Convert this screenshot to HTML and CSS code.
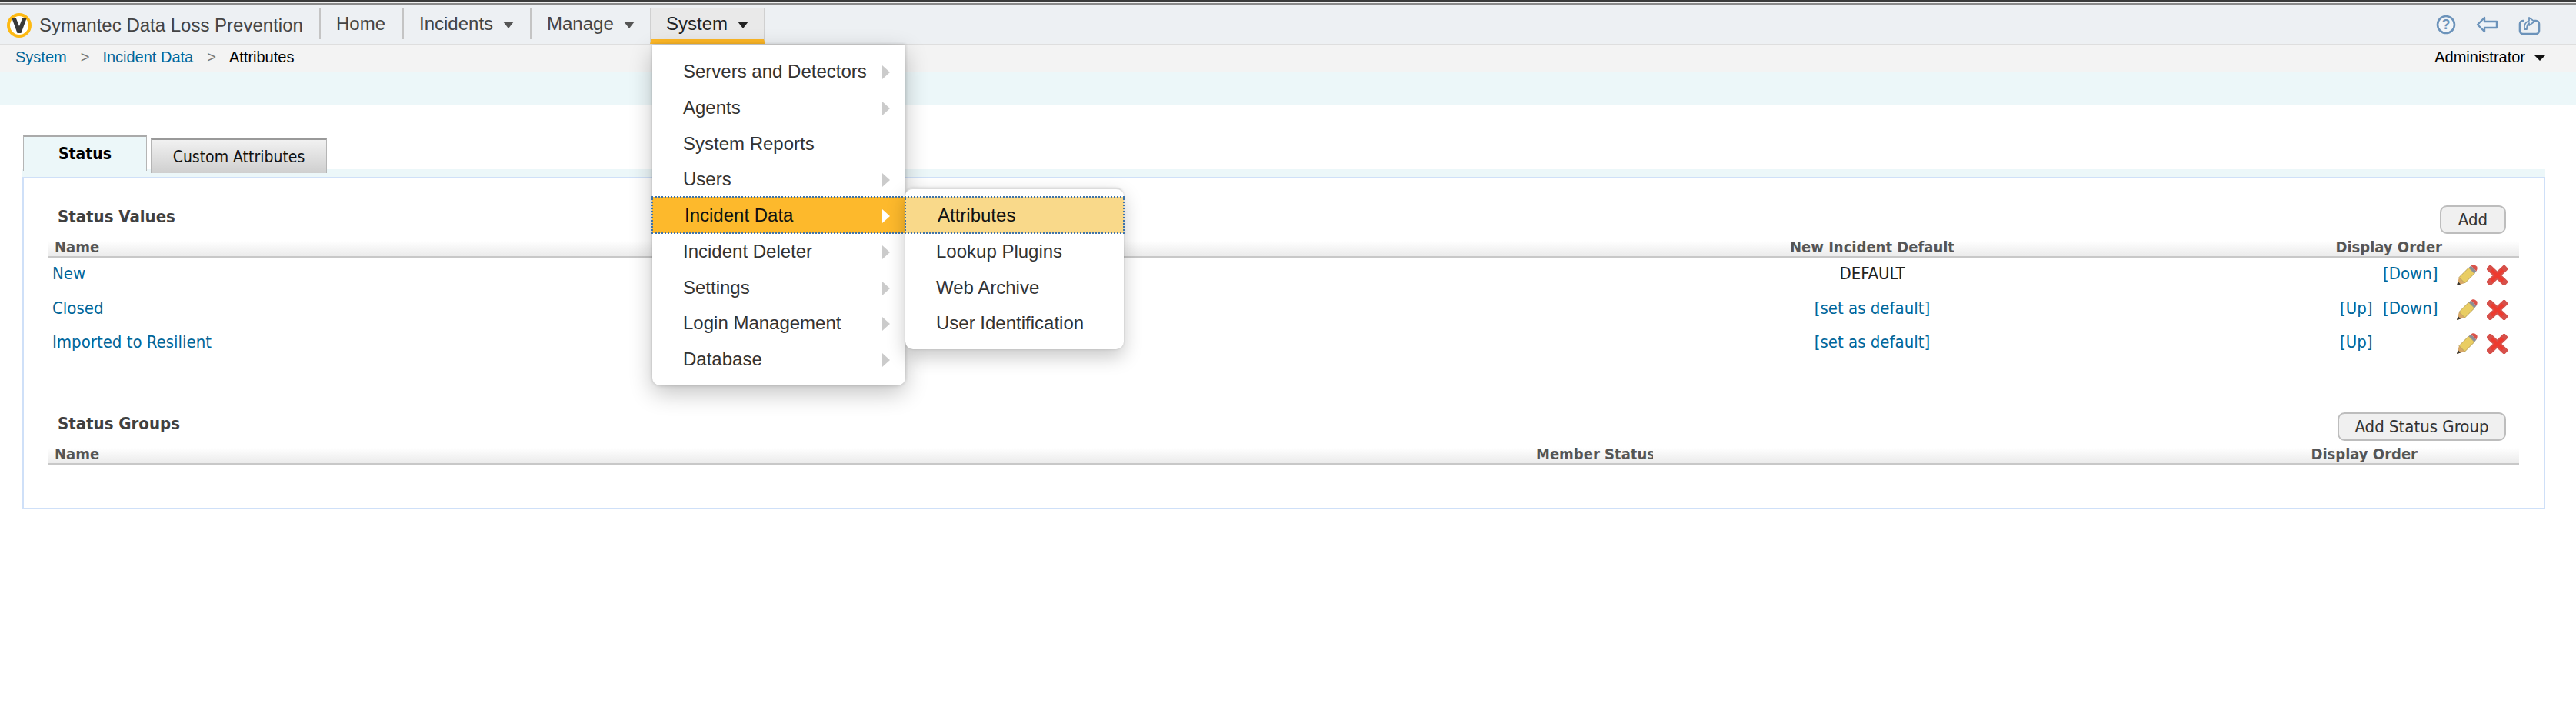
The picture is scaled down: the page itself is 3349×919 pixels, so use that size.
FILE: index.html
```html
<!DOCTYPE html>
<html lang="en">
<head>
<meta charset="utf-8">
<title>Symantec Data Loss Prevention</title>
<link rel="stylesheet" href="styles.css">
</head>
<body>
<svg class="defs" width="0" height="0" aria-hidden="true">
  <symbol id="pencil" viewBox="0 0 28 28">
    <polygon points="1,27 4,16.5 11.5,24" fill="#d8a868"/>
    <polygon points="1,27 2.6,22 6,25.4" fill="#333"/>
    <polygon points="4,16.5 16.5,4 24,11.5 11.5,24" fill="#e9cd63" stroke="#a98f45" stroke-width="0.8"/>
    <polygon points="16.5,4 19.5,1.5 26.5,8.5 24,11.5" fill="#8c8f92"/>
    <path d="M19.5 1.5 L21.5 0.3 Q24.5 -0.3 27 2.5 Q28.5 5 26.5 8.5 Z" fill="#d9534a"/>
  </symbol>
  <symbol id="cross" viewBox="0 0 27 26">
    <path d="M4.5 4.5 L22.5 21.5 M22.5 4.5 L4.5 21.5" stroke="#d6504a" stroke-width="8" stroke-linecap="square" fill="none"/>
    <path d="M6 6 L21 20 M21 6 L6 20" stroke="#ee3a2e" stroke-width="4" fill="none"/>
  </symbol>
  <symbol id="chev" viewBox="0 0 10 18"><polygon points="0,0 10,9 0,18"/></symbol>
</svg>

<div class="topline"></div>
<header class="nav">
  <div class="brand">
    <svg class="logo" viewBox="0 0 32 32">
      <circle cx="16" cy="16" r="14" fill="#fff" stroke="#fdb913" stroke-width="4"/>
      <path d="M6.5 7 H12 L16 17 L20 7 H25.5 L18.5 26 H13.5 Z" fill="#3a3a3a"/>
    </svg>
    <span>Symantec Data Loss Prevention</span>
  </div>
  <div class="nav-item home">Home</div>
  <div class="nav-item incidents">Incidents<i class="caret"></i></div>
  <div class="nav-item manage">Manage<i class="caret"></i></div>
  <div class="nav-item system">System<i class="caret dark"></i>
    <ul class="menu">
      <li>Servers and Detectors<svg class="chev"><use href="#chev"/></svg></li>
      <li>Agents<svg class="chev"><use href="#chev"/></svg></li>
      <li>System Reports</li>
      <li>Users<svg class="chev"><use href="#chev"/></svg></li>
      <li class="current">Incident Data<svg class="chev white"><use href="#chev"/></svg>
        <ul class="submenu">
          <li class="current-sub">Attributes</li>
          <li>Lookup Plugins</li>
          <li>Web Archive</li>
          <li>User Identification</li>
        </ul>
      </li>
      <li>Incident Deleter<svg class="chev"><use href="#chev"/></svg></li>
      <li>Settings<svg class="chev"><use href="#chev"/></svg></li>
      <li>Login Management<svg class="chev"><use href="#chev"/></svg></li>
      <li>Database<svg class="chev"><use href="#chev"/></svg></li>
    </ul>
  </div>
  <div class="tools">
    <svg class="tool-help" viewBox="0 0 26 26">
      <circle cx="13" cy="13" r="11" fill="#f2f5f8" stroke="#6c93ba" stroke-width="2.6"/>
      <text x="13" y="19" text-anchor="middle" class="help-q">?</text>
    </svg>
    <svg class="tool-back" viewBox="0 0 29 22">
      <polygon points="11,2 2,11 11,20 11,15 27,15 27,7 11,7" fill="#eef3f8" stroke="#6c93ba" stroke-width="2.4" stroke-linejoin="round"/>
    </svg>
    <svg class="tool-reload" viewBox="0 0 29 29">
      <path d="M8 10 H6 a4 4 0 0 0 -4 4 V23 a4 4 0 0 0 4 4 H23 a4 4 0 0 0 4 -4 V14 a4 4 0 0 0 -4 -4 H21" fill="none" stroke="#6c93ba" stroke-width="2.6"/>
      <path d="M8 21 C7 15 10 11 14 10 V6 L21 11 L14 16 V13 C12 14 11 17 11 21 Z" fill="#eef3f8" stroke="#6c93ba" stroke-width="1.8" stroke-linejoin="round"/>
    </svg>
  </div>
</header>

<div class="crumbs">
  <div class="trail">
    <a>System</a><span class="sep">&gt;</span><a>Incident Data</a><span class="sep">&gt;</span><span>Attributes</span>
  </div>
  <div class="user">Administrator<i class="caret black"></i></div>
</div>
<div class="band"></div>

<main class="main">
  <div class="tabs">
    <div class="tab active">Status</div>
    <div class="tab">Custom Attributes</div>
  </div>
  <section class="panel">
    <div class="sec-head">
      <h2>Status Values</h2>
      <button class="btn btn-add">Add</button>
    </div>
    <div class="grid values">
      <div class="th">Name</div>
      <div class="th center">New Incident Default</div>
      <div class="th right">Display Order</div>
      <div class="th"></div>

      <div class="td"><a>New</a></div>
      <div class="td center">DEFAULT</div>
      <div class="td order"><span class="up"></span><a class="down">[Down]</a></div>
      <div class="td acts"><svg class="ic-pencil"><use href="#pencil"/></svg><svg class="ic-cross"><use href="#cross"/></svg></div>

      <div class="td"><a>Closed</a></div>
      <div class="td center"><a>[set as default]</a></div>
      <div class="td order"><a class="up">[Up]</a><a class="down">[Down]</a></div>
      <div class="td acts"><svg class="ic-pencil"><use href="#pencil"/></svg><svg class="ic-cross"><use href="#cross"/></svg></div>

      <div class="td"><a>Imported to Resilient</a></div>
      <div class="td center"><a>[set as default]</a></div>
      <div class="td order"><a class="up">[Up]</a><span class="down"></span></div>
      <div class="td acts"><svg class="ic-pencil"><use href="#pencil"/></svg><svg class="ic-cross"><use href="#cross"/></svg></div>
    </div>

    <div class="sec-head second">
      <h2>Status Groups</h2>
      <button class="btn btn-group">Add Status Group</button>
    </div>
    <div class="grid groups">
      <div class="th">Name</div>
      <div class="th center">Member Status</div>
      <div class="th right">Display Order</div>
    </div>
  </section>
</main>
</body>
</html>
```

FILE: styles.css
```css
* { box-sizing: border-box; }
html, body { margin: 0; padding: 0; background: #fff; }
body { font-family: "Liberation Sans", Arial, sans-serif; color: #333; overflow: hidden; height: 919px; }
.defs { position: absolute; }
a { color: #00669a; }

.topline { height: 7px; background: linear-gradient(#3a3a3a 0 3px, #f0f0f0 3px 4px, #8a8a8a 4px 7px); }

.nav { display: flex; align-items: flex-start; height: 52px; background: #edf0f3; border-bottom: 2px solid #dedede; padding-top: 4px; font-size: 24px; color: #444; position: relative; z-index: 5; }
.brand { display: flex; align-items: center; width: 415px; height: 40px; padding-left: 9px; font-size: 24px; }
.logo { width: 32px; height: 32px; margin-right: 10px; margin-top: 4px; flex: none; }
.brand span { margin-top: 4px; }
.nav-item { height: 40px; line-height: 40px; border-left: 2px solid #c4c4c4; padding-left: 20px; flex: none; }
.home { width: 108px; }
.incidents { width: 166px; }
.manage { width: 156px; }
.system { width: 150px; height: 46px; position: relative; background: #e9e9e9; color: #222; border-left: 2px solid #d0d0d0; border-right: 2px solid #d0d0d0; border-bottom: 6px solid #fdb726; padding-left: 19px; }
.caret { display: inline-block; width: 0; height: 0; border-left: 7.5px solid transparent; border-right: 7.5px solid transparent; border-top: 9px solid #555; margin-left: 13px; vertical-align: 2px; }
.caret.dark { border-top-color: #222; }
.caret.black { border-top: 7px solid #111; margin-left: 12px; vertical-align: 2px; }

.menu, .submenu { list-style: none; margin: 0; background: #fff; font-size: 24px; color: #333; line-height: 48.75px; }
.menu { position: absolute; left: 1px; top: 47px; width: 329px; padding: 11px 0; border-radius: 0 0 10px 10px; box-shadow: 0 10px 30px rgba(0,0,0,.24), 0 0 4px rgba(0,0,0,.2); }
.menu li { height: 46.75px; padding-left: 40px; position: relative; white-space: nowrap; }
.chev { position: absolute; right: 20px; top: 16px; width: 10px; height: 18px; fill: #cbcbcb; }
.chev.white { fill: #fff; }
.menu li.current { background: #fdb92c; color: #111; padding-left: 42px; outline: 2px dotted #3f73a8; outline-offset: -1px; }
.submenu { position: absolute; left: 329px; top: -12px; width: 284px; height: 210px; padding: 12px 0 0; border-radius: 10px; border-top: 2px solid #dcdcdc; margin-top: 0; box-shadow: 0 10px 24px rgba(0,0,0,.22), 0 0 3px rgba(0,0,0,.15); color: #333; }
.menu .submenu li { padding-left: 40px; }
.menu .submenu { padding-top: 10px; }
.menu .submenu li.current-sub { background: #f9d98a; color: #111; padding-left: 42px; outline: 2px dotted #3f73a8; outline-offset: -1px; }

.tools { position: absolute; right: 0; top: 0; width: 190px; height: 50px; }
.tool-help { position: absolute; left: 8px; top: 12px; width: 26px; height: 26px; }
.help-q { font: bold 18px "Liberation Sans", sans-serif; fill: #6c93ba; }
.tool-back { position: absolute; left: 60px; top: 14px; width: 29px; height: 22px; }
.tool-reload { position: absolute; left: 115px; top: 10px; width: 29px; height: 29px; }

.crumbs { display: flex; justify-content: space-between; height: 34px; background: #f3f3f3; font-size: 20px; line-height: 30px; padding: 0 40px 0 20px; color: #000; }
.sep { color: #777; margin: 0 17px 0 18px; }
.band { height: 43px; background: #ecf7f9; }

.main { margin: 0 40px 0 29px; }
.tabs { display: flex; gap: 5px; height: 54px; padding-left: 1px; margin-top: 40px; background: linear-gradient(transparent 44px, #ecf7f9 44px); font-family: "DejaVu Sans Condensed", "DejaVu Sans", sans-serif; font-size: 21px; color: #111; }
.tab { height: 45px; margin-top: 4px; width: 229px; text-align: center; line-height: 44px; border: 1px solid #b5b5b5; border-top: 2px solid #999; border-bottom: 0; background: linear-gradient(#f1f1f1, #cfcfcf); }
.tab.active { width: 161px; height: 46px; margin-top: 0; font-weight: bold; background: #ecf7f9; color: #000; border-top-color: #aaa; }

.panel { border: 2px solid #cfe0f8; height: 432px; padding: 35px 32px 0 32px; font-family: "DejaVu Sans Condensed", "DejaVu Sans", sans-serif; font-size: 22px; }
.sec-head { display: flex; justify-content: space-between; align-items: flex-start; padding-right: 17px; height: 43px; }
.sec-head.second { margin-top: 67px; }
h2 { margin: 1px 0 0 12px; font-size: 22px; line-height: 28px; font-weight: bold; color: #404040; }
.btn { height: 37px; border: 2px solid #bdbdbd; border-radius: 9px; background: #f0f0f0; color: #333; font: inherit; padding: 0; }
.btn-add { width: 86px; }
.btn-group { width: 219px; }

.grid { display: grid; grid-template-rows: 25px; grid-auto-rows: 44.5px; }
.values { grid-template-columns: 2037px 668px 412px 95px; }
.groups { grid-template-columns: 1934px 152px 1126px; }
.th { height: 25px; line-height: 22px; padding-left: 8px; font-size: 20px; font-weight: bold; color: #555; background: linear-gradient(#fff 0, #fff 3px, #ececec 22px); border-bottom: 2px solid #c8c8c8; white-space: nowrap; }
.th.center { padding: 0; text-align: center; }
.th.right { padding: 0 5px 0 0; text-align: right; }
.values .th.right { padding-right: 5px; }
.groups .th.right { padding-right: 132px; }
.td { display: flex; align-items: center; padding: 0 0 3px 5px; color: #222; height: 44.5px; }
.td.center { justify-content: center; padding: 0 0 3px; }
.td.order { justify-content: flex-end; padding: 0 12px 3px 0; gap: 14px; }
.up { width: 42px; }
.down { width: 70px; }
.td.acts { padding: 2px 0 0 13px; gap: 12px; }
.ic-pencil { width: 28px; height: 28px; }
.ic-cross { width: 27px; height: 26px; }
```
